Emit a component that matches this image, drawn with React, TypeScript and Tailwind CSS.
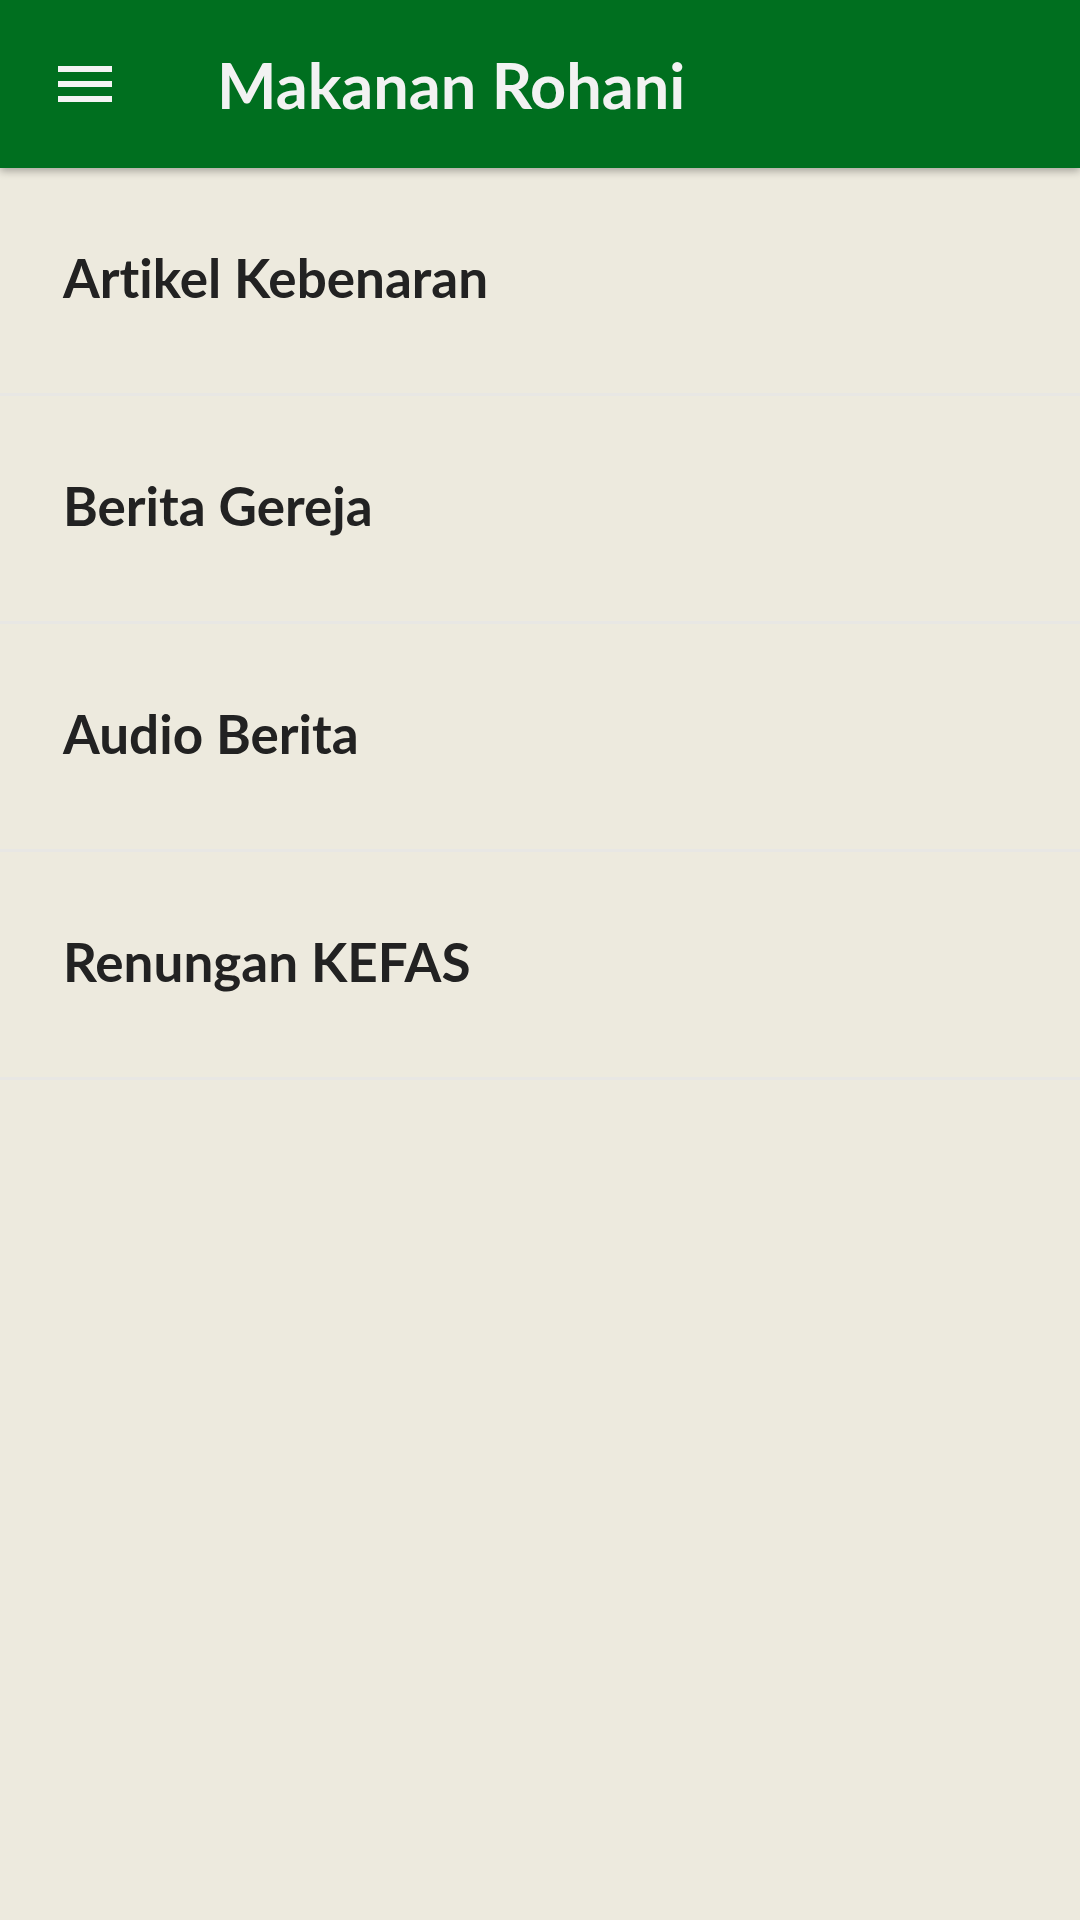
import React from 'react';

const items = ['Artikel Kebenaran', 'Berita Gereja', 'Audio Berita', 'Renungan KEFAS'];

const MenuIcon: React.FC = () => (
  <svg width="72" height="72" viewBox="0 0 24 24" fill="#f4f4f4">
    <path d="M3 18h18v-2H3v2zm0-5h18v-2H3v2zm0-7v2h18V6H3z" />
  </svg>
);

export default function App() {
  return (
    <div className="min-h-[1920px] w-[1080px] bg-[#edeade] font-['Lato','Noto_Sans',sans-serif] [font-variant-ligatures:none]">
      <header className="relative z-10 flex h-[168px] items-center bg-[#006f1f] shadow-[0_3px_8px_rgba(0,0,0,0.3)]">
        <button className="ml-[49px] flex h-[72px] w-[72px] items-center justify-center">
          <MenuIcon />
        </button>
        <h1 className="ml-[96px] text-[63px] font-bold leading-none text-[#f2f2f2]">Makanan Rohani</h1>
      </header>

      <ul>
        {items.map(item => (
          <li
            key={item}
            className="flex h-[228px] items-center border-b-[3px] border-[#e8e7e4] pb-[5px] pl-[63px] text-[53px] font-bold text-[#222222]"
          >
            {item}
          </li>
        ))}
      </ul>
    </div>
  );
}
